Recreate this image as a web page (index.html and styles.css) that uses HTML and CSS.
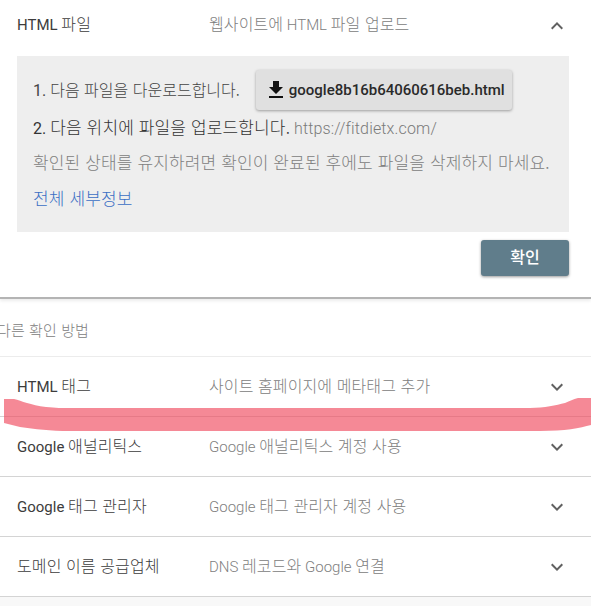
FILE: index.html
```html
<!DOCTYPE html>
<html lang="ko">
<head>
    <meta charset="UTF-8">
    <title>HTML 파일 확인</title>
    <link rel="stylesheet" href="styles.css">
</head>
<body>
    <section class="card">
        <div class="row row-open">
            <div class="row-title">HTML <span class="ko">파일</span></div>
            <div class="row-desc"><span class="ko">웹사이트에</span> HTML <span class="ko">파일 업로드</span></div>
            <svg class="chevron" viewBox="0 0 24 24"><path d="M12 8l-6 6 1.41 1.41L12 10.83l4.59 4.58L18 14z"/></svg>
        </div>
        <div class="panel">
            <div class="step step-one">
                <span class="step-text">1. <span class="ko">다음 파일을 다운로드합니다.</span></span>
                <div class="download">
                    <svg class="download-icon" viewBox="0 0 24 24"><path d="M19 9h-4V3H9v6H5l7 7 7-7zM5 18v2h14v-2H5z"/></svg>
                    <span>google8b16b64060616beb.html</span>
                </div>
            </div>
            <div class="step step-two">2. <span class="ko">다음 위치에 파일을 업로드합니다.</span> <span class="url">https://fitdietx.com/</span></div>
            <div class="note"><span class="ko">확인된 상태를 유지하려면 확인이 완료된 후에도 파일을 삭제하지 마세요.</span></div>
            <a class="details" href="#"><span class="ko">전체 세부정보</span></a>
        </div>
        <div class="actions">
            <div class="confirm"><span class="ko">확인</span></div>
        </div>
    </section>

    <div class="other-label"><span class="ko">다른 확인 방법</span></div>

    <section class="methods">
        <div class="row">
            <div class="row-title">HTML <span class="ko">태그</span></div>
            <div class="row-desc"><span class="ko">사이트 홈페이지에 메타태그 추가</span></div>
            <svg class="chevron" viewBox="0 0 24 24"><path d="M16.59 8.59L12 13.17 7.41 8.59 6 10l6 6 6-6z"/></svg>
        </div>
        <div class="row">
            <div class="row-title">Google <span class="ko">애널리틱스</span></div>
            <div class="row-desc">Google <span class="ko">애널리틱스 계정 사용</span></div>
            <svg class="chevron" viewBox="0 0 24 24"><path d="M16.59 8.59L12 13.17 7.41 8.59 6 10l6 6 6-6z"/></svg>
        </div>
        <div class="row">
            <div class="row-title">Google <span class="ko">태그 관리자</span></div>
            <div class="row-desc">Google <span class="ko">태그 관리자 계정 사용</span></div>
            <svg class="chevron" viewBox="0 0 24 24"><path d="M16.59 8.59L12 13.17 7.41 8.59 6 10l6 6 6-6z"/></svg>
        </div>
        <div class="row">
            <div class="row-title"><span class="ko">도메인 이름 공급업체</span></div>
            <div class="row-desc">DNS <span class="ko">레코드와</span> Google <span class="ko">연결</span></div>
            <svg class="chevron" viewBox="0 0 24 24"><path d="M16.59 8.59L12 13.17 7.41 8.59 6 10l6 6 6-6z"/></svg>
        </div>
    </section>

    <div class="page-end"></div>

    <!-- pink marker scribbled over the screenshot -->
    <svg class="marker" viewBox="0 0 591 34"><path d="M4 1H14C22 3 30 7 46 9C56 10 62 10 70 10H530C545 10 556 7 565 5C570 3 573 1 578 0H591V27C580 30 565 33 540 33H70C50 33 35 31 20 29L4 25Z"/></svg>
</body>
</html>
```

FILE: styles.css
```css
body {
    margin: 0;
    height: 606px;
    overflow: hidden;
    position: relative;
    background-color: #fff;
    font-family: Roboto, "Noto Sans CJK KR", sans-serif;
    font-size: 15px;
    color: #3c3c3c;
}

/* hangul runs larger than the latin text next to it */
.ko {
    font-family: "Noto Sans CJK KR", sans-serif;
    font-size: 16px;
    font-weight: 300;
    letter-spacing: 0.1px;
}

.card {
    height: 297px;
    border-bottom: 2px solid #b4b4b4;
    box-shadow: 0 2px 3px rgba(0, 0, 0, 0.08);
}

.row {
    display: flex;
    align-items: center;
    height: 59px;
    padding-left: 17px;
    border-bottom: 1px solid #d4d4d4;
}

.row-open {
    height: 52px;
    padding-bottom: 4px;
    border-bottom: 0;
}

.row-title {
    width: 192px;
    height: 20px;
    line-height: 20px;
    margin-top: -3px;
}

.row-desc {
    flex: 1;
    height: 20px;
    line-height: 20px;
    margin-top: -3px;
    font-weight: 300;
    color: #808080;
}

.row-open .row-title,
.row-open .row-desc {
    margin-top: -7px;
}

.chevron {
    width: 24px;
    height: 24px;
    margin-right: 22px;
    fill: #616161;
}

.panel {
    height: 176px;
    margin: 0 22px 0 17px;
    padding: 14px 16px 0;
    box-sizing: border-box;
    background-color: #eeeeee;
    font-size: 16px;
}

.panel .ko {
    font-size: 17px;
    letter-spacing: 0.13px;
}

.step-one {
    display: flex;
    align-items: center;
    gap: 16px;
    color: #444;
}

.step-text {
    margin-top: -2px;
}

.panel .step-text .ko {
    font-size: 16px;
    letter-spacing: 0;
}

.download {
    display: flex;
    align-items: center;
    gap: 1px;
    width: 256px;
    height: 40px;
    padding-left: 8px;
    box-sizing: border-box;
    border-radius: 3px;
    background-color: #e0e0e0;
    box-shadow: 0 1px 3px rgba(0, 0, 0, 0.35);
    font-size: 15px;
    font-weight: 500;
    color: #2a2a2a;
}

.download-icon {
    width: 24px;
    height: 24px;
    fill: #111;
}

.step-two {
    height: 20px;
    margin-top: 7px;
    line-height: 19px;
    color: #333;
}

.url {
    font-weight: 300;
    letter-spacing: 0.15px;
    color: #7a7a7a;
}

.note {
    height: 20px;
    margin-top: 15px;
    line-height: 20px;
    color: #808080;
}

.details {
    display: block;
    height: 20px;
    margin-top: 16px;
    line-height: 20px;
    color: #3b6fc4;
    text-decoration: none;
}

.actions {
    display: flex;
    justify-content: flex-end;
    margin: 8px 22px 0 0;
}

.confirm {
    width: 88px;
    height: 36px;
    line-height: 32px;
    text-align: center;
    border-radius: 3px;
    background-color: #607d8b;
    box-shadow: 0 1px 3px rgba(0, 0, 0, 0.4);
    color: #fff;
}

.confirm .ko {
    font-weight: 500;
}

.other-label {
    height: 57px;
    line-height: 62px;
    margin-left: -3px;
    color: #808080;
}

.other-label .ko {
    font-size: 15px;
}

.methods {
    border-top: 1px solid #ececec;
}

.page-end {
    height: 10px;
    background-color: #f8f8f8;
}

.marker {
    position: absolute;
    left: 0;
    top: 398px;
    width: 591px;
    height: 34px;
    fill: #f04b5f;
    opacity: 0.65;
}
```
